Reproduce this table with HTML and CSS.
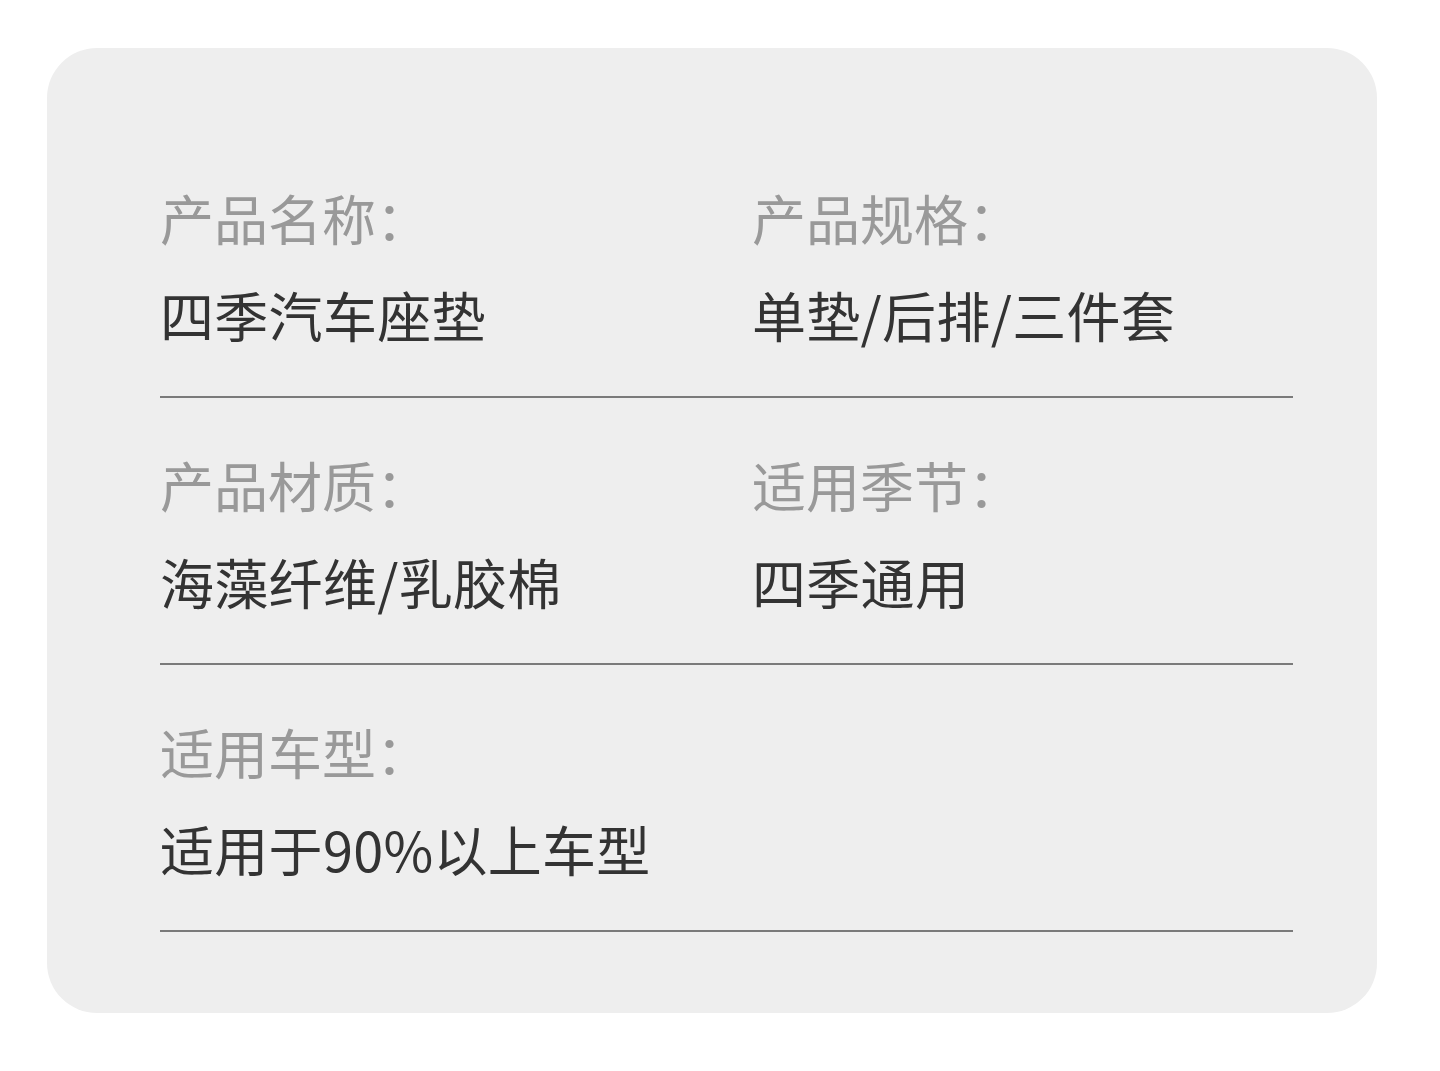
FILE: index.html
```html
<!DOCTYPE html>
<html lang="zh-CN">
<head>
<meta charset="utf-8">
<title>产品信息</title>
<link rel="stylesheet" href="styles.css">
</head>
<body>
<div class="card">
  <div class="row">
    <div class="cell">
      <div class="label">产品名称：</div>
      <div class="value">四季汽车座垫</div>
    </div>
    <div class="cell">
      <div class="label">产品规格：</div>
      <div class="value">单垫/后排/三件套</div>
    </div>
  </div>
  <div class="row">
    <div class="cell">
      <div class="label">产品材质：</div>
      <div class="value">海藻纤维/乳胶棉</div>
    </div>
    <div class="cell">
      <div class="label">适用季节：</div>
      <div class="value">四季通用</div>
    </div>
  </div>
  <div class="row">
    <div class="cell">
      <div class="label">适用车型：</div>
      <div class="value">适用于90%以上车型</div>
    </div>
  </div>
</div>
</body>
</html>
```

FILE: styles.css
```css
html, body {
  margin: 0;
  padding: 0;
  background: #ffffff;
}
body {
  width: 1440px;
  height: 1071px;
  font-family: "Noto Sans CJK SC", "Noto Sans", sans-serif;
  padding-top: 48px;
  box-sizing: border-box;
}
.card {
  margin-left: 47px;
  width: 1330px;
  height: 965px;
  box-sizing: border-box;
  background: #eeeeee;
  border-radius: 50px;
  padding: 140px 84px 0 113px;
}
.row {
  display: grid;
  grid-template-columns: 592px 1fr;
  border-bottom: 2px solid #7a7a7a;
  padding-bottom: 51px;
  margin-bottom: 57px;
}
.cell {
  display: flex;
  flex-direction: column;
  gap: 37px;
}
.label {
  font-size: 54px;
  line-height: 60px;
  color: #999999;
}
.value {
  font-size: 54px;
  line-height: 60px;
  color: #333333;
  letter-spacing: 0.3px;
}
```
